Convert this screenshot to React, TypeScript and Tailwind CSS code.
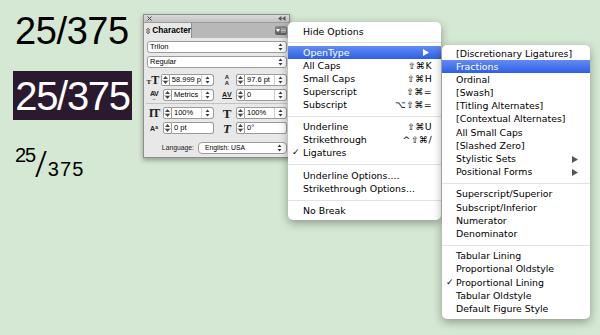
import React from 'react';

type MenuEntry =
  | { kind: 'item'; label: string; shortcut?: string; check?: boolean; arrow?: boolean; active?: boolean }
  | { kind: 'sep'; h: string };

const mainMenu: MenuEntry[] = [
  { kind: 'item', label: 'Hide Options' },
  { kind: 'sep', h: 'h-[8px]' },
  { kind: 'item', label: 'OpenType', arrow: true, active: true },
  { kind: 'item', label: 'All Caps', shortcut: '⇧⌘K' },
  { kind: 'item', label: 'Small Caps', shortcut: '⇧⌘H' },
  { kind: 'item', label: 'Superscript', shortcut: '⇧⌘=' },
  { kind: 'item', label: 'Subscript', shortcut: '⌥⇧⌘=' },
  { kind: 'sep', h: 'h-[8px]' },
  { kind: 'item', label: 'Underline', shortcut: '⇧⌘U' },
  { kind: 'item', label: 'Strikethrough', shortcut: '^⇧⌘/' },
  { kind: 'item', label: 'Ligatures', check: true },
  { kind: 'sep', h: 'h-[10px]' },
  { kind: 'item', label: 'Underline Options....' },
  { kind: 'item', label: 'Strikethrough Options...' },
  { kind: 'sep', h: 'h-[8px]' },
  { kind: 'item', label: 'No Break' },
];

const openTypeMenu: MenuEntry[] = [
  { kind: 'item', label: '[Discretionary Ligatures]' },
  { kind: 'item', label: 'Fractions', active: true },
  { kind: 'item', label: 'Ordinal' },
  { kind: 'item', label: '[Swash]' },
  { kind: 'item', label: '[Titling Alternates]' },
  { kind: 'item', label: '[Contextual Alternates]' },
  { kind: 'item', label: 'All Small Caps' },
  { kind: 'item', label: '[Slashed Zero]' },
  { kind: 'item', label: 'Stylistic Sets', arrow: true },
  { kind: 'item', label: 'Positional Forms', arrow: true },
  { kind: 'sep', h: 'h-[9px]' },
  { kind: 'item', label: 'Superscript/Superior' },
  { kind: 'item', label: 'Subscript/Inferior' },
  { kind: 'item', label: 'Numerator' },
  { kind: 'item', label: 'Denominator' },
  { kind: 'sep', h: 'h-[9px]' },
  { kind: 'item', label: 'Tabular Lining' },
  { kind: 'item', label: 'Proportional Oldstyle' },
  { kind: 'item', label: 'Proportional Lining', check: true },
  { kind: 'item', label: 'Tabular Oldstyle' },
  { kind: 'item', label: 'Default Figure Style' },
];

const Arrow = ({ color }: { color: string }) => (
  <svg width="6" height="7" viewBox="0 0 6 7">
    <path d="M0 0 L6 3.5 L0 7 Z" fill={color} />
  </svg>
);

const MenuList = ({ entries, gutter }: { entries: MenuEntry[]; gutter: string }) => (
  <>
    {entries.map((e, i) =>
      e.kind === 'sep' ? (
        <div key={i} className={`${e.h} flex items-center`}>
          <div className="h-px w-full bg-[#e2e2e2]" />
        </div>
      ) : (
        <div
          key={i}
          className={`h-[13.2px] flex items-center pr-[9px] ${
            e.active ? 'bg-linear-to-b from-[#648bf4] to-[#2e5fe4] text-white' : 'text-black'
          }`}
        >
          <div className={`${gutter} pl-[4px] text-[9px]`}>{e.check ? '✓' : ''}</div>
          <span className="flex-1 whitespace-nowrap">{e.label}</span>
          {e.shortcut && <span className="whitespace-nowrap tracking-[0.3px]">{e.shortcut}</span>}
          {e.arrow && (
            <span className="pr-[3px]">
              <Arrow color={e.active ? '#ffffff' : '#555555'} />
            </span>
          )}
        </div>
      )
    )}
  </>
);

const UpDown = () => (
  <svg width="5" height="8" viewBox="0 0 5 8">
    <path d="M2.5 0.5 L4.5 3 L0.5 3 Z M2.5 7.5 L4.5 5 L0.5 5 Z" fill="#3a3a3a" />
  </svg>
);

const Stepper = () => (
  <div className="w-[9px] h-full bg-white border border-[#9b9b9b] rounded-l-[2px] flex flex-col">
    <div className="flex-1 flex items-center justify-center border-b border-[#c8c8c8]">
      <svg width="5" height="3" viewBox="0 0 5 3">
        <path d="M2.5 0 L5 3 L0 3 Z" fill="#444" />
      </svg>
    </div>
    <div className="flex-1 flex items-center justify-center">
      <svg width="5" height="3" viewBox="0 0 5 3">
        <path d="M0 0 L5 0 L2.5 3 Z" fill="#444" />
      </svg>
    </div>
  </div>
);

const Field = ({ value, arrows = true }: { value: string; arrows?: boolean }) => (
  <div className="flex-1 h-full bg-white border border-l-0 border-[#9b9b9b] rounded-r-[3px] flex items-center text-[7.5px] text-black">
    <span className="flex-1 pl-[2px] whitespace-nowrap overflow-hidden">{value}</span>
    {arrows && (
      <span className="h-full flex items-center px-[3px] border-l border-[#d0d0d0]">
        <UpDown />
      </span>
    )}
  </div>
);

const Row = ({ icon, value, arrows = true }: { icon: React.ReactNode; value: string; arrows?: boolean }) => (
  <div className="flex items-center h-[12px]">
    <div className="w-[16px] h-full flex items-center justify-center text-[#222]">{icon}</div>
    <div className="flex h-full flex-1 ml-[1px]">
      <Stepper />
      <Field value={value} arrows={arrows} />
    </div>
  </div>
);

const serif = "font-['Liberation_Serif',serif]";

const Select = ({ value }: { value: string }) => (
  <div className="h-[12px] bg-white border border-[#9b9b9b] rounded-[3px] flex items-center pl-[2px] pr-[3px] text-[7.5px] text-black">
    <span className="flex-1">{value}</span>
    <UpDown />
  </div>
);

const CharacterPanel = () => (
  <div className="absolute left-[143px] top-[14px] w-[147px] bg-[#e8e8e8] border border-[#8e8e8e] shadow-[0_2px_5px_rgba(0,0,0,0.35)] font-['Liberation_Sans',Arial,sans-serif] flex flex-col">
    <div className="h-[7px] bg-linear-to-b from-[#dadada] to-[#c2c2c2] flex items-center justify-between px-[3px]">
      <svg width="5" height="5" viewBox="0 0 5 5">
        <path d="M0.5 0.5 L4.5 4.5 M4.5 0.5 L0.5 4.5" stroke="#444" strokeWidth="1" />
      </svg>
      <svg width="8" height="5" viewBox="0 0 8 5">
        <path d="M0 2.5 L3.5 0 L3.5 5 Z M4 2.5 L7.5 0 L7.5 5 Z" fill="#555" />
      </svg>
    </div>
    <div className="h-[16px] bg-[#b8b8b8] border-t border-[#9d9d9d] flex items-end">
      <div className="h-[15px] w-[48px] bg-[#e8e8e8] border-r border-[#909090] flex items-center gap-[2px] pl-[2px]">
        <svg width="5" height="8" viewBox="0 0 5 8">
          <path d="M2.5 0.5 L4.5 3 L0.5 3 Z M2.5 7.5 L4.5 5 L0.5 5 Z" fill="none" stroke="#333" strokeWidth="0.8" />
        </svg>
        <span className="text-[8.3px] font-bold text-black leading-none">Character</span>
      </div>
      <div className="flex-1" />
      <div className="self-center mr-[2px] w-[12px] h-[9px] rounded-[2px] bg-linear-to-b from-[#8a8a8a] to-[#5d5d5d] flex items-center gap-[1px] px-[1px]">
        <svg width="4" height="3" viewBox="0 0 4 3">
          <path d="M0 0 L4 0 L2 3 Z" fill="#fff" />
        </svg>
        <svg width="5" height="5" viewBox="0 0 5 5">
          <path d="M0 1 H5 M0 2.5 H5 M0 4 H5" stroke="#ddd" strokeWidth="0.8" />
        </svg>
      </div>
    </div>
    <div className="px-[2px] pt-[3px] pb-[3px] flex flex-col">
      <div className="ml-[1px] flex flex-col gap-[3px]">
        <Select value="Trilon" />
        <Select value="Regular" />
      </div>
      <div className="grid grid-cols-2 gap-x-[5px] gap-y-[3px] mt-[6px]">
        <Row
          value="58.999 p"
          icon={
            <span className={`${serif} font-bold leading-none flex items-end`}>
              <span className="text-[7px]">T</span>
              <span className="text-[12px]">T</span>
            </span>
          }
        />
        <Row
          value="97.6 pt"
          icon={
            <span className="flex flex-col items-center leading-none text-[6px] font-bold">
              <span>A</span>
              <span>A</span>
            </span>
          }
        />
        <Row
          value="Metrics"
          icon={
            <span className="flex flex-col items-center leading-none">
              <span className="text-[7px] font-bold tracking-[-0.5px]">AV</span>
              <span className="text-[4px]">↔</span>
            </span>
          }
        />
        <Row
          value="0"
          icon={
            <span className="flex flex-col items-center leading-none">
              <span className="text-[7px] font-bold tracking-[0.5px]">AV</span>
              <span className="h-px w-[10px] bg-[#222]" />
            </span>
          }
        />
      </div>
      <div className="h-px bg-[#c2c2c2] mt-[2px] mb-[3px]" />
      <div className="grid grid-cols-2 gap-x-[5px] gap-y-[3px]">
        <Row
          value="100%"
          icon={<span className={`${serif} font-bold text-[12px] leading-none tracking-[-1px]`}>IT</span>}
        />
        <Row
          value="100%"
          icon={<span className={`${serif} font-bold text-[13px] leading-none`}>T</span>}
        />
        <Row
          value="0 pt"
          arrows={false}
          icon={
            <span className="flex items-start leading-none">
              <span className="text-[7px] font-bold">A</span>
              <span className="text-[5px] font-bold">a</span>
            </span>
          }
        />
        <Row
          value="0°"
          arrows={false}
          icon={<span className={`${serif} font-bold italic text-[13px] leading-none`}>T</span>}
        />
      </div>
      <div className="flex items-center mt-[8px]">
        <span className="w-[48px] text-right text-[6.8px] text-[#222]">Language:</span>
        <div className="flex-1 ml-[4px] h-[12px] bg-white border border-[#9b9b9b] rounded-[4px] flex items-center pl-[6px] pr-[4px] text-[6.8px] text-black">
          <span className="flex-1">English: USA</span>
          <UpDown />
        </div>
      </div>
    </div>
  </div>
);

export default function App() {
  return (
    <div className="relative w-[600px] h-[335px] overflow-hidden bg-[#d5e8d3] font-['Liberation_Sans',Arial,sans-serif]">
      <div className="flex flex-col items-start pl-[13px] pt-[12px]">
        <div className="pl-[2px] text-[38px] leading-none tracking-[-0.4px] text-black">25/375</div>
        <div className="mt-[21px] w-[119px] h-[49px] bg-[#2b1a2f] flex items-center justify-center text-white text-[40px] leading-none tracking-[-1.3px]">
          25/375
        </div>
        <div className="mt-[25px] pl-[2px] flex items-start text-black leading-none">
          <span className="text-[20px] tracking-[-1px]">25</span>
          <span className="text-[41px] font-['Liberation_Serif',serif] -mt-[2px]">/</span>
          <span className="text-[20px] mt-[14px] ml-[1px] tracking-[1.2px]">375</span>
        </div>
      </div>

      <CharacterPanel />

      <div className="absolute left-[288px] top-[22px] w-[153px] pt-[3px] pb-[3px] bg-white rounded-[5px] shadow-[0_3px_10px_rgba(0,0,0,0.35)] font-['DejaVu_Sans',sans-serif] text-[9.4px]">
        <MenuList entries={mainMenu} gutter="w-[15px]" />
      </div>

      <div className="absolute left-[442px] top-[45px] w-[148px] pt-[2px] pb-[3px] bg-white rounded-[5px] shadow-[0_3px_10px_rgba(0,0,0,0.35)] font-['DejaVu_Sans',sans-serif] text-[9.4px]">
        <MenuList entries={openTypeMenu} gutter="w-[14px]" />
      </div>
    </div>
  );
}
